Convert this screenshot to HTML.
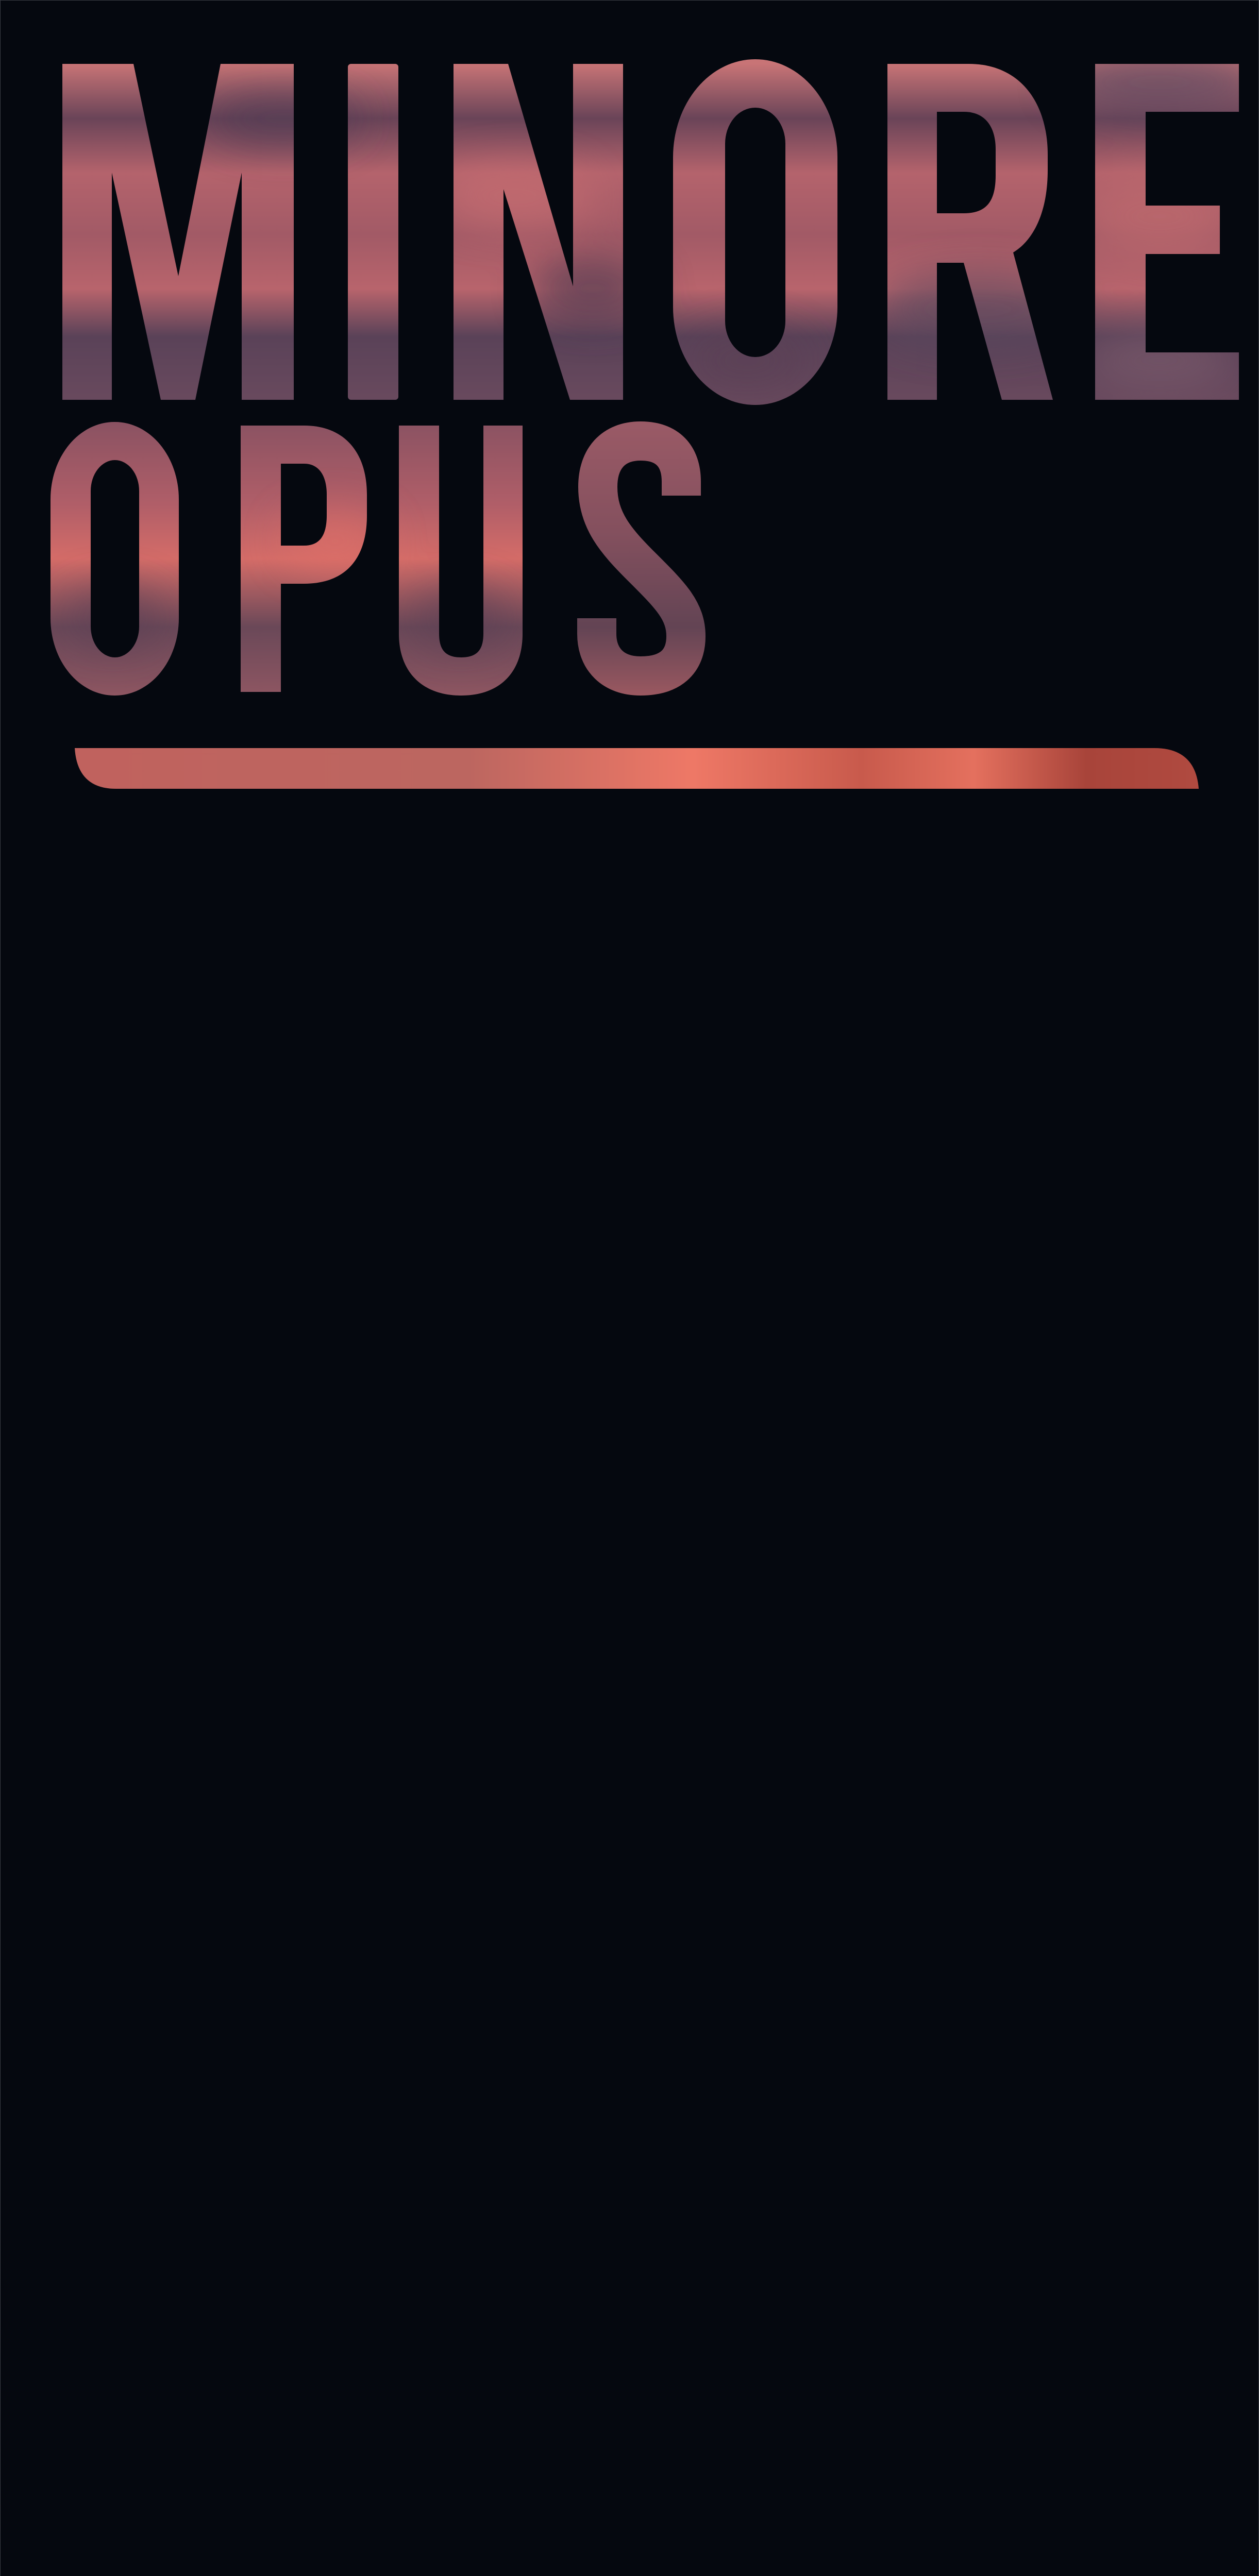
<!DOCTYPE html>
<html><head><meta charset="utf-8"><style>
html,body{margin:0;padding:0;background:#05080f;overflow:hidden;}
body{width:2443px;height:5298px;overflow:hidden;position:relative;}
.frame{position:absolute;left:0;top:0;width:2443px;height:5298px;box-sizing:border-box;border:1px solid #3a3d44;}
svg{position:absolute;left:0;top:0;display:block;}
</style></head><body><div class="frame"></div>
<svg width="2443" height="1600" viewBox="0 0 2443 1600" xmlns="http://www.w3.org/2000/svg">
<defs>
<linearGradient id="g1" x1="0" y1="124" x2="0" y2="786" gradientUnits="userSpaceOnUse">
<stop offset="0" stop-color="#c87476"/><stop offset="0.16" stop-color="#6a4458"/>
<stop offset="0.32" stop-color="#b4636c"/><stop offset="0.5" stop-color="#a25a66"/>
<stop offset="0.66" stop-color="#b8646c"/><stop offset="0.8" stop-color="#5a4258"/>
<stop offset="1" stop-color="#6a4a5e"/></linearGradient>
<linearGradient id="g2" x1="0" y1="819" x2="0" y2="1350" gradientUnits="userSpaceOnUse">
<stop offset="0" stop-color="#8a5262"/><stop offset="0.3" stop-color="#b05e68"/>
<stop offset="0.5" stop-color="#d46c68"/><stop offset="0.75" stop-color="#6a4858"/>
<stop offset="1" stop-color="#8e5662"/></linearGradient>
<linearGradient id="gs" x1="0" y1="819" x2="0" y2="1350" gradientUnits="userSpaceOnUse">
<stop offset="0" stop-color="#9a5a66"/><stop offset="0.4" stop-color="#84505e"/>
<stop offset="0.75" stop-color="#634454"/><stop offset="1" stop-color="#9a5860"/></linearGradient>
<linearGradient id="g3" x1="145" y1="0" x2="2326" y2="0" gradientUnits="userSpaceOnUse">
<stop offset="0" stop-color="#c0625e"/><stop offset="0.35" stop-color="#bc6660"/>
<stop offset="0.55" stop-color="#ee7866"/><stop offset="0.7" stop-color="#c85a4c"/>
<stop offset="0.8" stop-color="#e4705e"/><stop offset="0.9" stop-color="#a8443a"/>
<stop offset="1" stop-color="#b04a40"/></linearGradient>
<filter id="b" x="-50%" y="-50%" width="200%" height="200%"><feGaussianBlur stdDeviation="40"/></filter>
<clipPath id="c1">
<path d="M121,124 L259,124 L346,536 L428,124 L570,124 L570,776 L469,776 L469,335 L379,776 L312,776 L217,335 L217,776 L121,776 Z"/>
<rect x="675" y="124" width="98" height="652" rx="6"/>
<path d="M880,124 L986,124 L1112,556 L1112,124 L1209,124 L1209,776 L1106,776 L977,367 L977,776 L880,776 Z"/>
<rect x="1306" y="115" width="319" height="671" rx="160" ry="190"/>
<path d="M1722,124 L1880,124 C1980,124 2033,200 2033,300 L2033,330 C2033,420 2000,470 1966,490 L2043,776 L1944,776 L1870,510 L1818,510 L1818,776 L1722,776 Z"/>
<path d="M2125,124 L2404,124 L2404,217 L2223,217 L2223,399 L2367,399 L2367,493 L2223,493 L2223,684 L2404,684 L2404,776 L2125,776 Z"/>
</clipPath>
<clipPath id="c2">
<rect x="98" y="819" width="249" height="531" rx="124" ry="150"/>
<path d="M467,826 L590,826 C670,826 712,880 712,960 L712,1000 C712,1085 670,1133 590,1133 L545,1133 L545,1343 L467,1343 Z"/>
<path d="M774,826 L852,826 L852,1230 C852,1262 865,1276 895,1276 C925,1276 938,1262 938,1230 L938,826 L1014,826 L1014,1230 C1014,1305 970,1350 895,1350 C820,1350 774,1305 774,1230 Z"/>
</clipPath>
</defs>
<g clip-path="url(#c1)">
<rect x="0" y="100" width="2443" height="700" fill="url(#g1)"/>
<g filter="url(#b)" opacity="0.7">
<ellipse cx="550" cy="230" rx="150" ry="50" fill="#4e3a52"/>
<ellipse cx="1150" cy="560" rx="120" ry="60" fill="#4a3850"/>
<ellipse cx="2250" cy="160" rx="200" ry="60" fill="#5a4a62"/>
<ellipse cx="1900" cy="600" rx="200" ry="70" fill="#5a4a5e"/>
<ellipse cx="1450" cy="700" rx="120" ry="60" fill="#5a4054"/>
<ellipse cx="1000" cy="380" rx="150" ry="60" fill="#c86e72"/>
<ellipse cx="2250" cy="420" rx="150" ry="80" fill="#c06a6e"/>
<ellipse cx="2250" cy="700" rx="150" ry="60" fill="#7a5a6c"/>
</g>
</g>
<rect x="1407" y="209" width="117" height="484" rx="58" ry="70" fill="#05080f"/>
<path d="M1818,217 L1870,217 C1915,217 1932,250 1932,290 L1932,340 C1932,390 1915,414 1870,414 L1818,414 Z" fill="#05080f"/>
<g clip-path="url(#c2)">
<rect x="0" y="800" width="1100" height="560" fill="url(#g2)"/>
<g filter="url(#b)" opacity="0.6">
<ellipse cx="650" cy="1050" rx="100" ry="60" fill="#e07068"/>
<ellipse cx="895" cy="1200" rx="100" ry="60" fill="#5a4054"/>
<ellipse cx="220" cy="1200" rx="100" ry="60" fill="#5a4054"/>
</g>
</g>
<rect x="176" y="893" width="94" height="383" rx="47" ry="60" fill="#05080f"/>
<path d="M545,900 L590,900 C620,900 634,925 634,960 L634,1000 C634,1040 620,1059 590,1059 L545,1059 Z" fill="#05080f"/>
<path d="M1322,962 L1322,935 C1322,885 1295,856 1243,856 C1190,856 1160,890 1160,945 C1160,1010 1195,1050 1245,1100 C1300,1155 1331,1185 1331,1235 C1331,1285 1300,1312 1243,1312 C1190,1312 1158,1280 1158,1230 L1158,1200" fill="none" stroke="url(#gs)" stroke-width="76"/>
<path d="M145,1452 L2240,1452 Q2320,1452 2326,1531 L225,1531 Q150,1531 145,1452 Z" fill="url(#g3)"/>
</svg>
</body></html>
